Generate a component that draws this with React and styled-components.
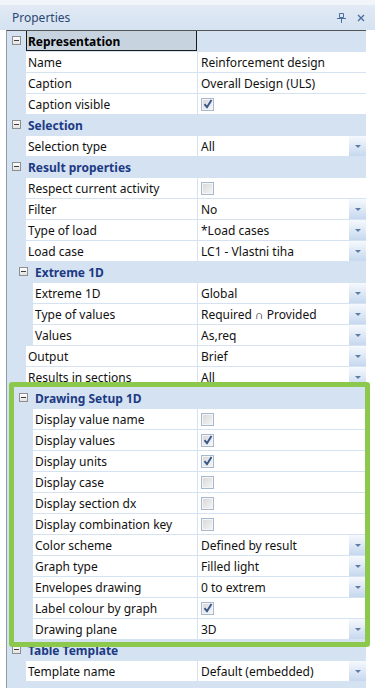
import React from 'react'
import styled, { createGlobalStyle } from 'styled-components'

const GlobalStyle = createGlobalStyle`
body {
    margin: 0;
    background: #fff;
    font-family: "Noto Sans", "Liberation Sans", sans-serif;
}
`

const Panel = styled.div`
position: relative;
width: 375px;
height: 694px;
overflow: hidden;
background: #fff;
`

const TitleBar = styled.div`
display: flex;
align-items: center;
justify-content: space-between;
height: 25px;
border-top: 5px solid #f1f4f8;
padding: 0 10px 0 12px;
background: linear-gradient(#e1eaf5, #d5e2f1);
color: #2b4673;
font-size: 12px;
`

const TitleTools = styled.div`
display: flex;
align-items: center;
gap: 11px;
`

const Grid = styled.div`
margin-left: 6px;
width: 359px;
border-left: 1px solid #8d99a8;
border-top: 1px solid #555;
background: #d5e2f1;
`

const Row = styled.div`
display: flex;
height: 21px;
box-sizing: border-box;
border-bottom: 1px solid #d5e2f1;
font-size: 12px;
line-height: 22px;
`

const Gutter = styled.div`
position: relative;
flex: none;
width: ${p => 19 + p.$depth * 7}px;
`

const Expander = styled.div`
position: absolute;
top: 5px;
left: ${p => 5 + p.$depth * 7}px;
width: 7px;
height: 7px;
border: 1px solid #8e8e8e;
background: linear-gradient(#fdfdfd, #e2e2e2);
&::after {
    content: '';
    position: absolute;
    left: 1px;
    top: 3px;
    width: 5px;
    height: 1px;
    background: #3c3c3c;
}
`

const NameCell = styled.div`
flex: none;
box-sizing: border-box;
width: ${p => 171 - p.$depth * 7}px;
height: 20px;
padding-left: 2px;
white-space: nowrap;
overflow: hidden;
background: ${p => (p.$cat ? 'transparent' : '#fff')};
color: ${p => (p.$cat ? '#1c3a84' : '#111')};
font-weight: ${p => (p.$cat ? 700 : 400)};
${p => p.$selected && `
    background: #c7d4e0;
    color: #000;
    border: 1px solid #1c1c1c;
    border-top: none;
    padding-left: 1px;
    line-height: 21px;
`}
`

const ValueCell = styled.div`
flex: 1;
display: flex;
align-items: center;
height: 20px;
border-left: 1px solid #d5e2f1;
padding-left: 3px;
background: ${p => (p.$cat ? 'transparent' : '#fff')};
color: #111;
white-space: nowrap;
`

const ValueText = styled.span`
flex: 1;
height: 20px;
overflow: hidden;
`

const DropButton = styled.div`
flex: none;
display: flex;
align-items: center;
justify-content: center;
width: 17px;
height: 20px;
background: linear-gradient(#f6f9fd, #c6d8ef);
`

const Arrow = styled.div`
width: 0;
height: 0;
border-left: 3px solid transparent;
border-right: 3px solid transparent;
border-top: 3px solid #5c7ca6;
`

const CheckBox = styled.div`
position: relative;
width: 11px;
height: 11px;
border: 1px solid #a8b8cf;
background: linear-gradient(135deg, #d6d6d6, #f7f7f7);
box-shadow: inset 0 0 0 1px #f4f4f4;
& svg {
    position: absolute;
    left: 1px;
    top: 0;
}
`

const Filler = styled.div`
height: 6px;
`

const Highlight = styled.div`
position: absolute;
left: 9px;
top: 382px;
width: 351px;
height: 255px;
border: 5px solid #8cc84b;
border-radius: 3px;
pointer-events: none;
`

const rows = [
    { cat: true, label: 'Representation', selected: true },
    { label: 'Name', value: 'Reinforcement design' },
    { label: 'Caption', value: 'Overall Design (ULS)' },
    { label: 'Caption visible', check: true },
    { cat: true, label: 'Selection' },
    { label: 'Selection type', value: 'All', drop: true },
    { cat: true, label: 'Result properties' },
    { label: 'Respect current activity', check: false },
    { label: 'Filter', value: 'No', drop: true },
    { label: 'Type of load', value: '*Load cases', drop: true },
    { label: 'Load case', value: 'LC1 - Vlastni tiha', drop: true },
    { cat: true, label: 'Extreme 1D', depth: 1 },
    { label: 'Extreme 1D', value: 'Global', drop: true, depth: 1 },
    { label: 'Type of values', value: 'Required ∩ Provided', drop: true, depth: 1 },
    { label: 'Values', value: 'As,req', drop: true, depth: 1 },
    { label: 'Output', value: 'Brief', drop: true },
    { label: 'Results in sections', value: 'All', drop: true },
    { cat: true, label: 'Drawing Setup 1D', depth: 1 },
    { label: 'Display value name', check: false, depth: 1 },
    { label: 'Display values', check: true, depth: 1 },
    { label: 'Display units', check: true, depth: 1 },
    { label: 'Display case', check: false, depth: 1 },
    { label: 'Display section dx', check: false, depth: 1 },
    { label: 'Display combination key', check: false, depth: 1 },
    { label: 'Color scheme', value: 'Defined by result', drop: true, depth: 1 },
    { label: 'Graph type', value: 'Filled light', drop: true, depth: 1 },
    { label: 'Envelopes drawing', value: '0 to extrem', drop: true, depth: 1 },
    { label: 'Label colour by graph', check: true, depth: 1 },
    { label: 'Drawing plane', value: '3D', drop: true, depth: 1 },
    { cat: true, label: 'Table Template' },
    { label: 'Template name', value: 'Default (embedded)', drop: true },
]

const PinIcon = () => (
    <svg width="9" height="10" viewBox="0 0 9 10">
        <path d="M2.5 0.5h4v4h-4z M0 5.5h9 M4.5 5.5v4.5" stroke="#4d6e9c" strokeWidth="1" fill="none" />
    </svg>
)

const CloseIcon = () => (
    <svg width="8" height="8" viewBox="0 0 8 8">
        <path d="M1 1l6 6M7 1l-6 6" stroke="#4d6e9c" strokeWidth="1.4" />
    </svg>
)

const Check = () => (
    <svg width="10" height="10" viewBox="0 0 10 10">
        <path d="M1.5 5.2l2.5 3 4.5-7.2" stroke="#34558a" strokeWidth="1.9" fill="none" />
    </svg>
)

const PropertyRow = ({ row }) => {
    const depth = row.depth || 0
    return (
        <Row>
            <Gutter $depth={depth}>
                {row.cat && <Expander $depth={depth} />}
            </Gutter>
            <NameCell $depth={depth} $cat={row.cat} $selected={row.selected}>
                {row.label}
            </NameCell>
            <ValueCell $cat={row.cat}>
                {row.check !== undefined && (
                    <CheckBox>{row.check && <Check />}</CheckBox>
                )}
                {row.value && <ValueText>{row.value}</ValueText>}
                {row.drop && (
                    <DropButton>
                        <Arrow />
                    </DropButton>
                )}
            </ValueCell>
        </Row>
    )
}

const App = () => {
    return (
        <Panel>
            <GlobalStyle />
            <TitleBar>
                Properties
                <TitleTools>
                    <PinIcon />
                    <CloseIcon />
                </TitleTools>
            </TitleBar>
            <Grid>
                {rows.map((row, i) => (
                    <PropertyRow key={i} row={row} />
                ))}
                <Filler />
            </Grid>
            <Highlight />
        </Panel>
    )
}

export default App
